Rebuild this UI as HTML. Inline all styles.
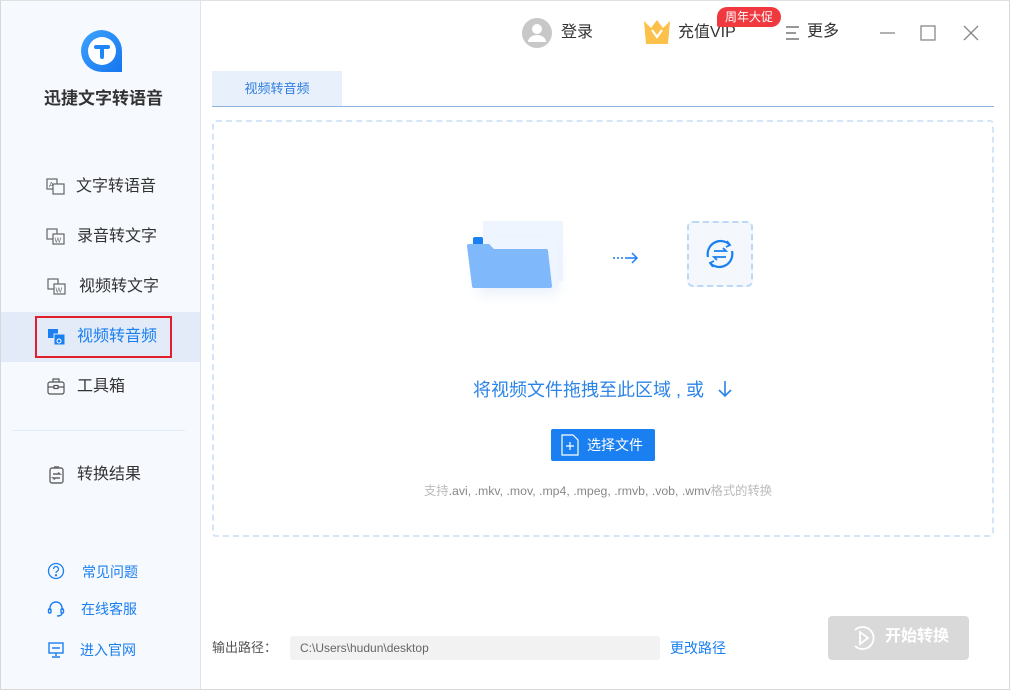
<!DOCTYPE html>
<html><head><meta charset="utf-8"><style>
*{margin:0;padding:0;box-sizing:border-box}
body{width:1010px;height:690px;position:relative;background:#fff;font-family:"Liberation Sans","Noto Sans CJK SC",sans-serif;overflow:hidden}
.a{position:absolute}
.win{position:absolute;left:0;top:0;width:1010px;height:690px;border:1px solid #d8d8d8;border-top:1px solid #e0e0e0}
.side{left:1px;top:1px;width:200px;height:688px;background:#f6f9fe;border-right:1px solid #dbe4ef}
.nav{font-size:16px;color:#333;line-height:20px}
.lnk{font-size:14px;color:#1a7ff0;line-height:18px}
</style></head><body>
<div class="win"></div>
<div class="a side"></div>
<!-- logo -->
<svg class="a" style="left:78px;top:27px" width="48" height="50" viewBox="0 0 48 50">
<defs><linearGradient id="g" x1="0" y1="0" x2="1" y2="1"><stop offset="0" stop-color="#3ea2ff"/><stop offset="1" stop-color="#1676ee"/></linearGradient></defs>
<path d="M24 3a21 21 0 0 0 0 42h20V24A21 21 0 0 0 24 3z" fill="url(#g)"/>
<circle cx="24" cy="24" r="14" fill="#fff"/>
<path d="M18 20h12M24 20v10" stroke="#1e86f5" stroke-width="4" stroke-linecap="round"/>
</svg>
<div class="a" style="left:44px;top:89px;font-size:17px;font-weight:bold;color:#333;line-height:20px">迅捷文字转语音</div>

<svg class="a" style="left:46px;top:178px" width="20" height="18" viewBox="0 0 20 18" fill="none" stroke="#666" stroke-width="1.2"><rect x="1" y="1" width="10" height="10"/><rect x="7" y="6" width="11" height="10" fill="#f6f9fe"/><text x="3" y="9" font-size="7" fill="#666" stroke="none">A</text></svg>
<div class="a nav" style="left:76px;top:177px">文字转语音</div>
<svg class="a" style="left:46px;top:228px" width="20" height="18" viewBox="0 0 20 18" fill="none" stroke="#666" stroke-width="1.2"><rect x="1" y="1" width="10" height="10"/><rect x="7" y="6" width="11" height="10" fill="#f6f9fe"/><text x="8.5" y="14.5" font-size="7" fill="#666" stroke="none">W</text></svg>
<div class="a nav" style="left:77px;top:227px">录音转文字</div>
<svg class="a" style="left:47px;top:278px" width="20" height="18" viewBox="0 0 20 18" fill="none" stroke="#666" stroke-width="1.2"><rect x="1" y="1" width="10" height="10"/><rect x="7" y="6" width="11" height="10" fill="#f6f9fe"/><text x="8.5" y="14.5" font-size="7" fill="#666" stroke="none">W</text></svg>
<div class="a nav" style="left:79px;top:277px">视频转文字</div>
<div class="a" style="left:1px;top:312px;width:199px;height:50px;background:#e2ebf7"></div>
<div class="a" style="left:35px;top:316px;width:137px;height:42px;border:2px solid #e0202a"></div>
<svg class="a" style="left:47px;top:328px" width="20" height="18" viewBox="0 0 20 18"><rect x="1" y="1" width="10" height="9" fill="#1a7ff0"/><rect x="7" y="6" width="11" height="11" fill="#1a7ff0" stroke="#e2ebf7"/><circle cx="12" cy="13" r="2" fill="none" stroke="#fff"/></svg>
<div class="a nav" style="left:77px;top:327px;color:#1a7ff0">视频转音频</div>
<svg class="a" style="left:47px;top:378px" width="18" height="17" viewBox="0 0 18 17" fill="none" stroke="#555" stroke-width="1.2"><rect x="1" y="4" width="16" height="12" rx="2"/><path d="M6 4V1h6v3M1 9h16"/><rect x="7" y="7.5" width="4" height="3" fill="#f6f9fe"/></svg>
<div class="a nav" style="left:77px;top:377px">工具箱</div>
<div class="a" style="left:13px;top:430px;width:172px;height:1px;background:#e2ecf8"></div>
<svg class="a" style="left:49px;top:466px" width="16" height="18" viewBox="0 0 16 18" fill="none" stroke="#666" stroke-width="1.4"><rect x="1" y="2" width="13" height="15" rx="2"/><path d="M5 1h5M4 8h7l-2-1.5M11 12H4l2 1.5"/></svg>
<div class="a nav" style="left:77px;top:465px">转换结果</div>
<svg class="a" style="left:47px;top:562px" width="18" height="18" viewBox="0 0 18 18" fill="none" stroke="#1a7ff0" stroke-width="1.3"><circle cx="9" cy="9" r="7.5"/><path d="M6.5 7a2.5 2.5 0 1 1 3.5 2.3c-.7.4-1 .8-1 1.7"/><circle cx="9" cy="13.3" r=".5" fill="#1a7ff0"/></svg>
<div class="a lnk" style="left:82px;top:563px">常见问题</div>
<svg class="a" style="left:47px;top:600px" width="18" height="18" viewBox="0 0 18 18" fill="none" stroke="#1a7ff0" stroke-width="1.4"><path d="M3 10V8a6 6 0 0 1 12 0v2"/><rect x="1.5" y="9" width="2.5" height="4" rx="1"/><rect x="14" y="9" width="2.5" height="4" rx="1"/><path d="M15 13c0 2-2 3-5 3"/></svg>
<div class="a lnk" style="left:81px;top:600px">在线客服</div>
<svg class="a" style="left:47px;top:641px" width="18" height="18" viewBox="0 0 18 18" fill="none" stroke="#1a7ff0" stroke-width="1.4"><rect x="2" y="2" width="14" height="10"/><path d="M5 7h8M9 12v3M5 16h8"/></svg>
<div class="a lnk" style="left:80px;top:641px">进入官网</div>

<!-- top bar -->
<svg class="a" style="left:522px;top:18px" width="30" height="30" viewBox="0 0 30 30"><circle cx="15" cy="15" r="15" fill="#c8c8c8"/><circle cx="15" cy="11" r="5" fill="#fff"/><path d="M6 24a9 7 0 0 1 18 0z" fill="#fff"/></svg>
<div class="a" style="left:561px;top:23px;font-size:16px;color:#333;line-height:20px">登录</div>
<svg class="a" style="left:643px;top:19px" width="28" height="26" viewBox="0 0 28 26"><path d="M1 2l7 7 6-8 6 8 7-7-2 23H3z" fill="#fcc14a"/><path d="M9 11l5 7 5-7" stroke="#fff" stroke-width="2.2" fill="none"/></svg>
<div class="a" style="left:678px;top:23px;font-size:16px;color:#333;line-height:20px">充值VIP</div>
<div class="a" style="left:717px;top:7px;width:64px;height:20px;background:#f0383f;border-radius:10px 10px 10px 2px;color:#fff;font-size:12px;line-height:20px;text-align:center">周年大促</div>
<svg class="a" style="left:785px;top:26px" width="15" height="14" viewBox="0 0 15 14" stroke="#777" stroke-width="1.6"><path d="M1 1h13M1 7h10M1 13h13"/></svg>
<div class="a" style="left:807px;top:22px;font-size:16px;color:#333;line-height:20px">更多</div>
<svg class="a" style="left:878px;top:24px" width="102" height="18" viewBox="0 0 102 18" fill="none" stroke="#888" stroke-width="1.3"><path d="M2 9h15"/><rect x="43" y="2" width="14" height="14"/><path d="M86 2l14 14M100 2L86 16"/></svg>

<!-- tab -->
<div class="a" style="left:212px;top:71px;width:130px;height:35px;background:#e8f1fb;color:#2f7de1;font-size:13px;line-height:35px;text-align:center">视频转音频</div>
<div class="a" style="left:212px;top:106px;width:782px;height:1px;background:#8db3dd"></div>
<div class="a" style="left:212px;top:120px;width:782px;height:417px;border:2px dashed #d3e5f7;border-radius:4px"></div>

<!-- illustration -->
<div class="a" style="left:483px;top:221px;width:80px;height:60px;background:#eef5fe"></div>
<div class="a" style="left:478px;top:238px;width:80px;height:50px;background:#eef5fe;box-shadow:0 6px 14px #e8f0fa"></div>
<svg class="a" style="left:466px;top:235px" width="88" height="54" viewBox="0 0 88 54"><rect x="7" y="2" width="10" height="8" rx="2" fill="#1a7ff0"/><path d="M3 9h20l5 5h52a2 2 0 0 1 2 2l4 35a2 2 0 0 1-2 2H8a2 2 0 0 1-2-2L1 11a2 2 0 0 1 2-2z" fill="#7fb8fb"/></svg>
<svg class="a" style="left:612px;top:251px" width="28" height="14" viewBox="0 0 28 14" fill="none" stroke="#1a7ff0" stroke-width="1.5"><path d="M1 7h2M5 7h2M9 7h2M13 7h12M20 2l5 5-5 5"/></svg>
<div class="a" style="left:687px;top:221px;width:66px;height:66px;background:#f4f8fd;border:2px dashed #bcd8f6;border-radius:6px"></div>
<svg class="a" style="left:703px;top:237px" width="34" height="34" viewBox="0 0 34 34" fill="none" stroke="#1a7ff0" stroke-width="2.2"><path d="M5 20A13 13 0 0 1 27 8"/><path d="M29 14A13 13 0 0 1 7 26"/><path d="M24 4l3 4-4 2M10 30l-3-4 4-2" stroke-width="1.8"/><path d="M11 14h12l-3-3M23 20H11l3 3" stroke-width="1.8"/></svg>

<div class="a" style="left:473px;top:379px;font-size:18px;color:#2b84e8;line-height:22px">将视频文件拖拽至此区域 , 或</div>
<svg class="a" style="left:717px;top:380px" width="16" height="18" viewBox="0 0 16 18" fill="none" stroke="#2b84e8" stroke-width="1.6"><path d="M8 1v15M2 10l6 6 6-6"/></svg>
<div class="a" style="left:551px;top:429px;width:104px;height:32px;background:#1a7ff0;border-radius:2px"></div>
<svg class="a" style="left:561px;top:434px" width="18" height="22" viewBox="0 0 18 22" fill="none" stroke="#fff" stroke-width="1.2"><path d="M1 1h11l5 5v15H1z"/><path d="M9 8v8M5 12h8"/></svg>
<div class="a" style="left:587px;top:436px;font-size:14px;color:#fff;line-height:18px">选择文件</div>
<div class="a" style="left:424px;top:483px;font-size:12.3px;color:#999;white-space:nowrap;line-height:16px"><span style="color:#bbb">支持</span><span style="color:#888">.avi, .mkv, .mov, .mp4, .mpeg, .rmvb, .vob, .wmv</span><span style="color:#bbb">格式的转换</span></div>

<!-- bottom -->
<div class="a" style="left:212px;top:640px;font-size:13px;color:#555;line-height:16px">输出路径：</div>
<div class="a" style="left:290px;top:636px;width:370px;height:24px;background:#f2f2f2;border-radius:3px;font-size:12px;color:#666;line-height:24px;padding-left:10px">C:\Users\hudun\desktop</div>
<div class="a" style="left:670px;top:639px;font-size:14px;color:#1a7ff0;line-height:18px">更改路径</div>
<div class="a" style="left:828px;top:616px;width:141px;height:44px;background:#d9d9d9;border-radius:4px"></div>
<svg class="a" style="left:849px;top:624px" width="28" height="28" viewBox="0 0 28 28" fill="none" stroke="#fff" stroke-width="1.8"><path d="M6 6a11 11 0 1 1 0 16"/><path d="M11 8v12l8-6z"/></svg>
<div class="a" style="left:885px;top:627px;font-size:16px;color:#fff;font-weight:bold;line-height:20px">开始转换</div>
</body></html>
